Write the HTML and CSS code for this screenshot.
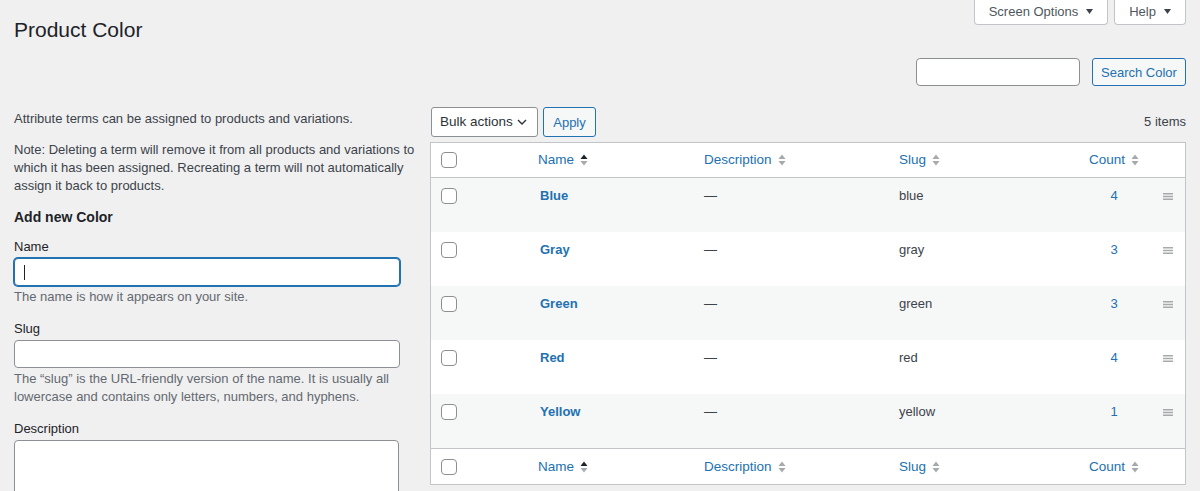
FILE: index.html
```html
<!DOCTYPE html>
<html>
<head>
	<meta http-equiv="Content-Type" content="text/html;charset=UTF-8" />
	<title>Product Color</title>
	<link rel="stylesheet" href="styles.css">
</head>
<body>
<div class="wrap">
	<div class="page-top">
		<h1 class="page-title">Product Color</h1>
		<div class="screen-meta">
			<button class="meta-link meta-options">Screen Options <svg width="7" height="5" viewBox="0 0 7 5"><polygon points="0,0 7,0 3.5,5" fill="#3c434a"/></svg></button>
			<button class="meta-link meta-help">Help <svg width="7" height="5" viewBox="0 0 7 5"><polygon points="0,0 7,0 3.5,5" fill="#3c434a"/></svg></button>
		</div>
	</div>

	<div class="search-row">
		<input type="text" class="search-input">
		<button class="btn btn-search">Search Color</button>
	</div>

	<div class="columns">
		<div class="col-left">
			<p class="intro">Attribute terms can be assigned to products and variations.</p>
			<p class="note">Note: Deleting a term will remove it from all products and variations to which it has been assigned. Recreating a term will not automatically assign it back to products.</p>
			<h2 class="add-title">Add new Color</h2>

			<div class="form-field first">
				<label>Name</label>
				<div class="fake-input focused"><span class="caret"></span></div>
				<p class="field-desc">The name is how it appears on your site.</p>
			</div>
			<div class="form-field">
				<label>Slug</label>
				<div class="fake-input"></div>
				<p class="field-desc">The &ldquo;slug&rdquo; is the URL-friendly version of the name. It is usually all lowercase and contains only letters, numbers, and hyphens.</p>
			</div>
			<div class="form-field">
				<label>Description</label>
				<div class="fake-textarea"></div>
			</div>
		</div>

		<div class="col-right">
			<div class="tablenav">
				<div class="select">Bulk actions <svg width="10" height="6" viewBox="0 0 10 6"><polyline points="1,1 5,5 9,1" fill="none" stroke="#2c3338" stroke-width="1.4"/></svg></div>
				<button class="btn btn-apply">Apply</button>
				<span class="num-items">5 items</span>
			</div>

			<table class="terms">
				<colgroup>
					<col style="width:97px">
					<col style="width:166px">
					<col style="width:195px">
					<col style="width:189px">
					<col style="width:72px">
					<col style="width:35px">
				</colgroup>
				<thead>
					<tr>
						<th class="cb"><span class="check"></span></th>
						<th><span class="sort-link">Name <svg width="8" height="12" viewBox="0 0 8 12"><polygon points="0.5,5 4,0.5 7.5,5" fill="#1d2327"/><polygon points="0.5,7 4,11.5 7.5,7" fill="#a7aaad"/></svg></span></th>
						<th><span class="sort-link">Description <svg width="8" height="12" viewBox="0 0 8 12"><polygon points="0.5,5 4,0.5 7.5,5" fill="#a7aaad"/><polygon points="0.5,7 4,11.5 7.5,7" fill="#a7aaad"/></svg></span></th>
						<th><span class="sort-link">Slug <svg width="8" height="12" viewBox="0 0 8 12"><polygon points="0.5,5 4,0.5 7.5,5" fill="#a7aaad"/><polygon points="0.5,7 4,11.5 7.5,7" fill="#a7aaad"/></svg></span></th>
						<th class="num"><span class="sort-link">Count <svg width="8" height="12" viewBox="0 0 8 12"><polygon points="0.5,5 4,0.5 7.5,5" fill="#a7aaad"/><polygon points="0.5,7 4,11.5 7.5,7" fill="#a7aaad"/></svg></span></th>
						<th></th>
					</tr>
				</thead>
				<tbody>
					<tr class="alt">
						<td class="cb"><span class="check"></span></td>
						<td><a class="row-title">Blue</a></td>
						<td>&mdash;</td>
						<td>blue</td>
						<td class="num"><a>4</a></td>
						<td class="handle"><svg width="10" height="7" viewBox="0 0 10 7"><path d="M0 0.75H10M0 3.5H10M0 6.25H10" stroke="#a7aaad" stroke-width="1.3"/></svg></td>
					</tr>
					<tr>
						<td class="cb"><span class="check"></span></td>
						<td><a class="row-title">Gray</a></td>
						<td>&mdash;</td>
						<td>gray</td>
						<td class="num"><a>3</a></td>
						<td class="handle"><svg width="10" height="7" viewBox="0 0 10 7"><path d="M0 0.75H10M0 3.5H10M0 6.25H10" stroke="#a7aaad" stroke-width="1.3"/></svg></td>
					</tr>
					<tr class="alt">
						<td class="cb"><span class="check"></span></td>
						<td><a class="row-title">Green</a></td>
						<td>&mdash;</td>
						<td>green</td>
						<td class="num"><a>3</a></td>
						<td class="handle"><svg width="10" height="7" viewBox="0 0 10 7"><path d="M0 0.75H10M0 3.5H10M0 6.25H10" stroke="#a7aaad" stroke-width="1.3"/></svg></td>
					</tr>
					<tr>
						<td class="cb"><span class="check"></span></td>
						<td><a class="row-title">Red</a></td>
						<td>&mdash;</td>
						<td>red</td>
						<td class="num"><a>4</a></td>
						<td class="handle"><svg width="10" height="7" viewBox="0 0 10 7"><path d="M0 0.75H10M0 3.5H10M0 6.25H10" stroke="#a7aaad" stroke-width="1.3"/></svg></td>
					</tr>
					<tr class="alt">
						<td class="cb"><span class="check"></span></td>
						<td><a class="row-title">Yellow</a></td>
						<td>&mdash;</td>
						<td>yellow</td>
						<td class="num"><a>1</a></td>
						<td class="handle"><svg width="10" height="7" viewBox="0 0 10 7"><path d="M0 0.75H10M0 3.5H10M0 6.25H10" stroke="#a7aaad" stroke-width="1.3"/></svg></td>
					</tr>
				</tbody>
				<tfoot>
					<tr>
						<th class="cb"><span class="check"></span></th>
						<th><span class="sort-link">Name <svg width="8" height="12" viewBox="0 0 8 12"><polygon points="0.5,5 4,0.5 7.5,5" fill="#1d2327"/><polygon points="0.5,7 4,11.5 7.5,7" fill="#a7aaad"/></svg></span></th>
						<th><span class="sort-link">Description <svg width="8" height="12" viewBox="0 0 8 12"><polygon points="0.5,5 4,0.5 7.5,5" fill="#a7aaad"/><polygon points="0.5,7 4,11.5 7.5,7" fill="#a7aaad"/></svg></span></th>
						<th><span class="sort-link">Slug <svg width="8" height="12" viewBox="0 0 8 12"><polygon points="0.5,5 4,0.5 7.5,5" fill="#a7aaad"/><polygon points="0.5,7 4,11.5 7.5,7" fill="#a7aaad"/></svg></span></th>
						<th class="num"><span class="sort-link">Count <svg width="8" height="12" viewBox="0 0 8 12"><polygon points="0.5,5 4,0.5 7.5,5" fill="#a7aaad"/><polygon points="0.5,7 4,11.5 7.5,7" fill="#a7aaad"/></svg></span></th>
						<th></th>
					</tr>
				</tfoot>
			</table>
		</div>
	</div>
</div>
</body>
</html>
```
FILE: styles.css
```css
html, body{
	margin:0;
	padding:0;
	background:#f0f0f1;
	color:#3c434a;
	font-family:"Liberation Sans", Arial, sans-serif;
	font-size:13px;
	line-height:18px;
	overflow:hidden;
}
.wrap{
	padding:0 14px;
}
.page-top{
	display:flex;
	justify-content:space-between;
	align-items:flex-start;
}
.page-title{
	margin:15px 0 0;
	font-size:21px;
	line-height:30px;
	font-weight:400;
	color:#1d2327;
}
.screen-meta{
	display:flex;
	gap:6px;
}
.meta-link{
	box-sizing:border-box;
	display:flex;
	align-items:center;
	justify-content:center;
	gap:8px;
	height:25px;
	padding:0 0 2px;
	background:#fff;
	border:1px solid #c3c4c7;
	border-top:0;
	border-radius:0 0 4px 4px;
	font-family:inherit;
	font-size:13px;
	white-space:nowrap;
	color:#50575e;
}
.meta-link svg{
	flex:none;
}
.meta-options{
	width:134px;
}
.meta-help{
	width:72px;
}
.search-row{
	display:flex;
	justify-content:flex-end;
	gap:12px;
	margin-top:13px;
}
.search-input{
	box-sizing:border-box;
	width:164px;
	height:28px;
	margin:0;
	border:1px solid #8c8f94;
	border-radius:4px;
	background:#fff;
}
.btn{
	box-sizing:border-box;
	height:28px;
	padding:0 9px;
	background:#f6f7f7;
	border:1px solid #2271b1;
	border-radius:3px;
	color:#2271b1;
	font-family:inherit;
	font-size:13px;
}
.btn-search{
	width:94px;
	padding:0;
}
.columns{
	display:flex;
	gap:10px;
	margin-top:21px;
}
.col-left{
	width:406px;
	flex:none;
}
.col-right{
	flex:1;
}
.col-left p{
	margin:0;
}
.intro{
	padding-top:3px;
}
.col-left .note{
	margin-top:13px;
}
.add-title{
	margin:12px 0 0;
	font-size:14px;
	line-height:20px;
	font-weight:700;
	color:#1d2327;
}
.form-field{
	margin-top:14px;
}
.form-field.first{
	margin-top:11px;
}
.form-field label{
	display:block;
	color:#1d2327;
}
.fake-input{
	box-sizing:border-box;
	width:386px;
	height:28px;
	margin-top:2px;
	background:#fff;
	border:1px solid #8c8f94;
	border-radius:4px;
	position:relative;
}
.fake-input.focused{
	border-color:#2271b1;
	box-shadow:0 0 0 1px #2271b1;
}
.caret{
	position:absolute;
	left:9px;
	top:6px;
	width:1px;
	height:15px;
	background:#1d2327;
}
.col-left .field-desc{
	margin-top:2px;
	color:#646970;
}
.fake-textarea{
	box-sizing:border-box;
	width:385px;
	height:94px;
	margin-top:2px;
	background:#fff;
	border:1px solid #8c8f94;
	border-radius:4px;
}
.tablenav{
	display:flex;
	align-items:center;
	gap:5px;
	height:30px;
}
.select{
	box-sizing:border-box;
	display:flex;
	align-items:center;
	justify-content:space-between;
	width:107px;
	height:30px;
	margin-left:1px;
	padding:0 10px 0 8px;
	background:#fff;
	border:1px solid #8c8f94;
	border-radius:3px;
	font-size:13.5px;
	color:#2c3338;
}
.btn-apply{
	height:30px;
	width:53px;
}
.num-items{
	margin-left:auto;
	color:#3c434a;
}
.terms{
	width:100%;
	margin-top:5px;
	table-layout:fixed;
	border-collapse:separate;
	border-spacing:0;
	background:#fff;
	border:1px solid #c3c4c7;
}
.terms th{
	padding:7px 10px 8px;
	line-height:19px;
	text-align:left;
	font-weight:400;
	font-size:13.5px;
	color:#2271b1;
}
.terms thead th{
	border-bottom:1px solid #c3c4c7;
}
.terms tfoot th{
	border-top:1px solid #c3c4c7;
	padding:8px 10px;
}
.terms td{
	height:38px;
	padding:8px 10px;
	line-height:19px;
	vertical-align:top;
	color:#3c434a;
}
.terms tr.alt td{
	background:#f6f7f7;
}
.terms .cb{
	padding-left:10px;
	padding-right:0;
}
.check{
	display:block;
	box-sizing:border-box;
	width:16px;
	height:16px;
	background:#fff;
	border:1px solid #8c8f94;
	border-radius:4px;
}
.terms td.cb .check{
	margin-top:2px;
}
.sort-link{
	display:inline-flex;
	align-items:center;
	gap:6px;
}
.terms .num{
	text-align:center;
}
.terms a{
	color:#2271b1;
	text-decoration:none;
}
.row-title{
	font-weight:700;
	padding-left:2px;
}
.terms td.handle{
	text-align:center;
	padding:8px 0;
}
.handle svg{
	display:inline-block;
	margin-top:6px;
}
```
